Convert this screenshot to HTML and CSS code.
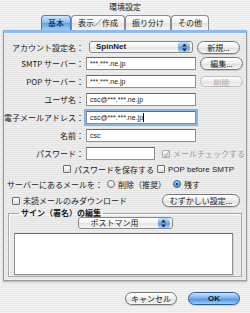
FILE: index.html
```html
<!DOCTYPE html>
<html lang="ja">
<head>
  <meta charset="UTF-8">
  <meta name="viewport" content="width=device-width, initial-scale=1.0">
  <title>環境設定</title>
  <link rel="stylesheet" href="styles.css">
</head>
<body>

  <div class="window">
    <div class="titlebar">環境設定</div>

    <div class="tabs">
      <div class="tab active">基本</div>
      <div class="tab">表示／作成</div>
      <div class="tab">振り分け</div>
      <div class="tab">その他</div>
    </div>

    <div class="panel">
      <div class="row r-account">
        <span class="lbl">アカウント設定名：</span>
        <div class="popup account-popup">
          <span class="popup-text">SpinNet</span>
          <span class="arrows">
            <svg width="7" height="9" viewBox="0 0 7 9"><path d="M3.5 0.5 L6 3.5 L1 3.5 Z M3.5 8.5 L6 5.5 L1 5.5 Z" fill="#1a2a44"/></svg>
          </span>
        </div>
        <button type="button" class="btn side-btn">新規...</button>
      </div>

      <div class="row r-smtp">
        <span class="lbl">SMTP サーバー：</span>
        <div class="field">***.***.ne.jp</div>
        <button type="button" class="btn side-btn">編集...</button>
      </div>

      <div class="row r-pop">
        <span class="lbl">POP サーバー：</span>
        <div class="field">***.***.ne.jp</div>
        <button type="button" class="btn side-btn disabled">削除</button>
      </div>

      <div class="row r-user">
        <span class="lbl">ユーザ名：</span>
        <div class="field">csc@***.***.ne.jp</div>
      </div>

      <div class="row r-mail">
        <span class="lbl">電子メールアドレス：</span>
        <div class="field focus">csc@***.***.ne.jp<span class="caret"></span></div>
      </div>

      <div class="row r-name">
        <span class="lbl">名前：</span>
        <div class="field">csc</div>
      </div>

      <div class="row r-pass">
        <span class="lbl">パスワード：</span>
        <div class="field short"></div>
        <span class="check off">
          <span class="cb checked">✓</span>メールチェックする
        </span>
      </div>

      <div class="row r-checks">
        <span class="check save-pass"><span class="cb"></span>パスワードを保存する</span>
        <span class="check"><span class="cb"></span>POP before SMTP</span>
      </div>

      <div class="row r-radio">
        <span class="lbl wide">サーバーにあるメールを：</span>
        <span class="radio-opt first"><span class="rb"></span>削除（推奨）</span>
        <span class="radio-opt"><span class="rb on"></span>残す</span>
      </div>

      <div class="row r-unread">
        <span class="check"><span class="cb"></span>未読メールのみダウンロード</span>
        <button type="button" class="btn adv-btn">むずかしい設定...</button>
      </div>

      <fieldset class="sign-box">
        <legend>サイン（署名）の編集</legend>
        <div class="popup sign-popup">
          <span class="popup-text">ポストマン用</span>
          <span class="arrows">
            <svg width="7" height="9" viewBox="0 0 7 9"><path d="M3.5 0.5 L6 3.5 L1 3.5 Z M3.5 8.5 L6 5.5 L1 5.5 Z" fill="#1a2a44"/></svg>
          </span>
        </div>
        <div class="sign-area"></div>
      </fieldset>
    </div>

    <div class="footer">
      <button type="button" class="btn foot-btn">キャンセル</button>
      <button type="button" class="btn foot-btn default">OK</button>
    </div>
  </div>

</body>
</html>
```

FILE: styles.css
```css
body {
  margin: 0;
  padding: 0;
  font-family: "Noto Sans CJK JP", sans-serif;
  color: #111;
}

.window {
  width: 250px;
  height: 313px;
  overflow: hidden;
  background: repeating-linear-gradient(to bottom, #f3f3f3 0 1px, #e9e9e9 1px 2px);
}

.titlebar {
  height: 15px;
  line-height: 13px;
  text-align: center;
  font-size: 8px;
  color: #222;
}

/* tabs */
.tabs {
  display: flex;
  justify-content: center;
  height: 15px;
}

.tab {
  height: 14px;
  padding: 0 6px;
  border: 1px solid #8c8c8c;
  border-bottom: none;
  border-radius: 4px 4px 0 0;
  background: linear-gradient(#ffffff, #f0f0f0 50%, #e2e2e2 51%, #f4f4f4);
  font-size: 8px;
  line-height: 14px;
  color: #222;
}

.tab.active {
  background: linear-gradient(#d4e7fa, #86b8ec 50%, #629fe2 51%, #a5cdf4);
  border-color: #4a7bbf;
  color: #0a1a30;
}

/* panel */
.panel {
  margin: 0 3px;
  width: 242px;
  padding: 6px 0 3px;
  border: 1px solid #9a9a9a;
  border-top: 3px solid #8fb9ea;
  background: repeating-linear-gradient(to bottom, #eeeeee 0 1px, #e4e4e4 1px 2px);
  box-shadow: 0 1px 2px rgba(0, 0, 0, 0.25);
}

.row {
  display: flex;
  align-items: center;
  font-size: 8px;
}

.r-account { height: 16px; }
.r-smtp { height: 17px; }
.r-pop { height: 18px; }
.r-user { height: 18px; }
.r-mail { height: 18px; }
.r-name { height: 19px; }
.r-pass { height: 17px; }
.r-checks { height: 14px; padding-left: 59px; }
.r-radio { height: 16px; }
.r-unread { height: 17px; padding-left: 8px; }

.lbl {
  width: 80px;
  flex-shrink: 0;
  text-align: right;
  white-space: nowrap;
  color: #222;
}

.lbl.wide {
  width: 99px;
}

.field {
  width: 105px;
  height: 11px;
  margin-left: 2px;
  padding-left: 3px;
  border: 1px solid #8e8e8e;
  border-top-color: #6a6a6a;
  background: #fff;
  font-family: "Liberation Sans", "Noto Sans CJK JP", sans-serif;
  font-size: 7px;
  line-height: 11px;
  color: #222;
  box-sizing: content-box;
  display: flex;
  align-items: center;
}

.field.short {
  width: 64px;
}

.field.focus {
  box-shadow: 0 0 0 2px #8db3e2;
}

.caret {
  display: inline-block;
  width: 1px;
  height: 9px;
  background: #000;
}

/* popups */
.popup {
  display: flex;
  align-items: center;
  height: 12px;
  border: 1px solid #878787;
  border-radius: 3px;
  background: linear-gradient(#ffffff, #f2f2f2 50%, #e4e4e4 51%, #f7f7f7);
  overflow: hidden;
  box-sizing: border-box;
}

.popup-text {
  flex: 1;
  padding-left: 6px;
  font-size: 8px;
  line-height: 10px;
}

.account-popup {
  width: 104px;
  margin-left: 5px;
}

.account-popup .popup-text {
  font-family: "Liberation Sans", sans-serif;
  font-weight: bold;
  color: #222;
}

.arrows {
  width: 12px;
  height: 10px;
  margin-right: 2px;
  border-radius: 2px;
  display: flex;
  align-items: center;
  justify-content: center;
  background: linear-gradient(#c7dff7, #7fb1ea 50%, #5f9de2 51%, #a7cef4);
}

/* buttons */
.btn {
  height: 13px;
  padding: 0;
  border: 1px solid #777;
  border-radius: 7px;
  background: linear-gradient(#ffffff, #ededed 50%, #dcdcdc 51%, #f8f8f8);
  font-family: "Noto Sans CJK JP", sans-serif;
  font-size: 8px;
  line-height: 11px;
  color: #222;
  box-shadow: 0 1px 1px rgba(0, 0, 0, 0.15);
}

.side-btn {
  width: 43px;
  margin-left: 4px;
}

.btn.disabled {
  height: 11px;
  border-color: #bdbdbd;
  color: #aaa;
  box-shadow: none;
}

.adv-btn {
  width: 78px;
  margin-left: auto;
  margin-right: 6px;
}

/* checkboxes and radios */
.check {
  display: flex;
  align-items: center;
  white-space: nowrap;
  color: #222;
}

.check.off {
  margin-left: 7px;
  color: #9a9a9a;
}

.save-pass {
  width: 94px;
}

.r-checks .check:last-child {
  font-family: "Liberation Sans", "Noto Sans CJK JP", sans-serif;
}

.cb {
  width: 6px;
  height: 6px;
  margin-right: 3px;
  border: 1px solid #6e6e6e;
  border-radius: 1px;
  background: linear-gradient(#ffffff, #dcdcdc);
  font-size: 8px;
  line-height: 6px;
  text-align: center;
}

.cb.checked {
  border-color: #aaa;
  color: #8a8a8a;
  text-indent: 1px;
}

.radio-opt {
  display: flex;
  align-items: center;
  margin-left: 4px;
  white-space: nowrap;
}

.radio-opt.first {
  width: 62px;
}

.rb {
  width: 6px;
  height: 6px;
  margin-right: 3px;
  border: 1px solid #6e6e6e;
  border-radius: 50%;
  background: linear-gradient(#ffffff, #dcdcdc);
  display: flex;
  align-items: center;
  justify-content: center;
}

.rb.on {
  border-color: #2f5f9f;
  background: linear-gradient(#a8cdf3, #4c8fdc);
}

.rb.on::after {
  content: "";
  width: 2px;
  height: 2px;
  border-radius: 50%;
  background: #0b1a30;
}

/* signature group */
.sign-box {
  margin: 0 4px;
  padding: 0 0 1px;
  border: 1px solid #a8a8a8;
  box-shadow: inset 1px 1px 0 #fafafa;
}

.sign-box legend {
  margin-left: 10px;
  padding: 0 2px;
  font-size: 8px;
  line-height: 8px;
  font-weight: bold;
  color: #222;
}

.sign-popup {
  width: 95px;
  margin: 0 auto;
}

.sign-popup .popup-text {
  padding-left: 12px;
  color: #222;
}

.sign-area {
  height: 40px;
  margin: 4px 8px 0 5px;
  border: 1px solid #8e8e8e;
  border-top-color: #6a6a6a;
  background: #fff;
  box-shadow: 1px 1px 0 #d6d6d6;
}

/* footer */
.footer {
  display: flex;
  justify-content: flex-end;
  gap: 11px;
  padding: 11px 10px 0 0;
}

.foot-btn {
  width: 52px;
}

.btn.default {
  border-color: #2d5d9c;
  background: linear-gradient(#cde3fa, #74aae8 50%, #4a8fe0 51%, #9dcaf6);
  font-family: "Liberation Sans", sans-serif;
  font-weight: bold;
  color: #0b1a30;
}
```
